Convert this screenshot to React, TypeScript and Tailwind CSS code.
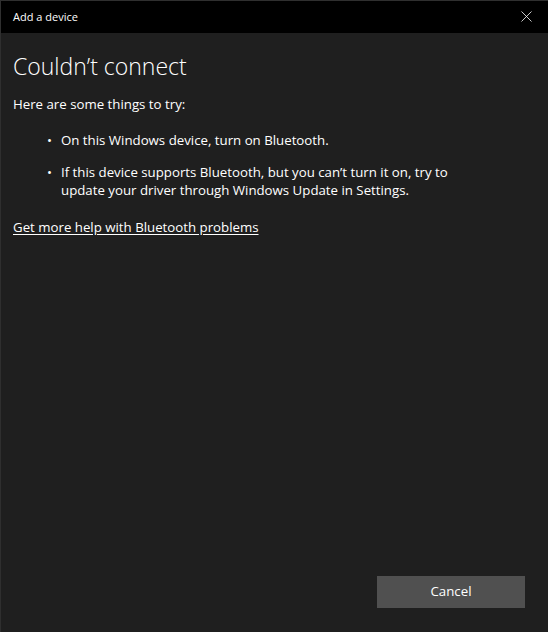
import { X } from 'lucide-react';

const font = { fontFamily: '"Open Sans", "Noto Sans", sans-serif' };

export default function App() {
  return (
    <div
      className="w-[548px] h-[632px] flex flex-col bg-[#1f1f1f] text-white border-l border-t border-[#2f2f2f]"
      style={font}
    >
      <div className="h-[32px] shrink-0 bg-black flex items-center justify-between pl-3 pr-[12px] pb-[2px]">
        <span className="text-[11px] leading-none">Add a device</span>
        <X className="w-[19px] h-[19px]" strokeWidth={1} />
      </div>

      <div className="flex-1 flex flex-col px-3">
        <h1 className="mt-[17px] text-[23px] leading-[32px] font-light">Couldn’t connect</h1>
        <p className="mt-[12px] text-[13.25px] leading-[20px]">Here are some things to try:</p>
        <ul className="mt-[17px] flex flex-col gap-[14px] text-[13.25px] leading-[18px]">
          <li className="flex">
            <span className="w-[48px] pl-[34px]">•</span>
            <span>On this Windows device, turn on Bluetooth.</span>
          </li>
          <li className="flex">
            <span className="w-[48px] pl-[34px]">•</span>
            <span>
              If this device supports Bluetooth, but you can’t turn it on, try to
              <br />
              update your driver through Windows Update in Settings.
            </span>
          </li>
        </ul>
        <a className="mt-[18px] self-start text-[13.25px] leading-[20px] underline underline-offset-2">
          Get more help with Bluetooth problems
        </a>

        <div className="mt-auto mb-[24px] flex justify-end pr-[11px]">
          <button className="w-[148px] h-[32px] bg-[#505050] text-[13.25px]">Cancel</button>
        </div>
      </div>
    </div>
  );
}
